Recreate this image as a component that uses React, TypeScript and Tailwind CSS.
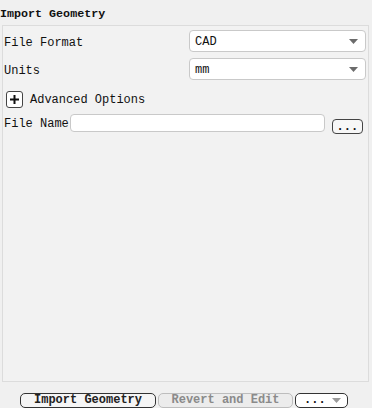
import React from "react";

const mono = { fontFamily: '"Liberation Mono", "DejaVu Sans Mono", monospace' };

function Caret({ color = "#6b6b6b" }: { color?: string }) {
  return (
    <svg width="9" height="5" viewBox="0 0 9 5">
      <path d="M0 0 H9 L4.5 5 Z" fill={color} />
    </svg>
  );
}

function Select({ value }: { value: string }) {
  return (
    <div className="flex h-[22px] w-[177px] items-center justify-between rounded-[4px] border border-[#c9c9c9] bg-white pl-[5px] pr-[7px]">
      <span className="pt-[2px] text-[12px] text-[#111]">{value}</span>
      <Caret />
    </div>
  );
}

export default function App() {
  return (
    <div className="flex h-[408px] w-[372px] flex-col bg-[#f0f0f0] text-[#111]" style={mono}>
      <div className="flex h-[25px] items-center pt-[4px] text-[11.7px] font-bold">Import Geometry</div>
      <div className="ml-[2px] mr-[3px] flex h-[357px] flex-col border border-[#dcdcdc] bg-[#f2f2f2]">
        <div className="mt-[4px] flex h-[22px] items-center justify-between pl-[1px] pr-[2px]">
          <span className="pt-[3px] text-[12px]">File Format</span>
          <Select value="CAD" />
        </div>
        <div className="mt-[6px] flex h-[22px] items-center justify-between pl-[1px] pr-[2px]">
          <span className="pt-[3px] text-[12px]">Units</span>
          <Select value="mm" />
        </div>
        <div className="mt-[10px] flex h-[18px] items-center pl-[3px]">
          <div className="flex h-[17px] w-[17px] items-center justify-center rounded-[3px] border border-[#444] bg-white">
            <svg width="11" height="11" viewBox="0 0 11 11">
              <path d="M5.5 1 V10 M1 5.5 H10" stroke="#111" strokeWidth="2" />
            </svg>
          </div>
          <span className="ml-[7px] pt-[2px] text-[12px]">Advanced Options</span>
        </div>
        <div className="mt-[5px] flex h-[20px] items-center pl-[1px]">
          <span className="pt-[2px] text-[12px]">File Name</span>
          <div className="ml-[1px] h-[18px] w-[255px] rounded-[4px] border border-[#c9c9c9] bg-white" />
          <div className="ml-[7px] mt-[7px] flex h-[15px] w-[31px] items-end justify-center rounded-[4px] border border-[#444] bg-[#f7f7f7] pb-[1px] text-[12px] font-bold leading-[10px]">
            ...
          </div>
        </div>
      </div>
      <div className="flex flex-1 items-center pl-[20px] pt-[10px]">
        <div className="flex h-[15px] w-[136px] items-center justify-center rounded-[5px] border border-[#333] bg-[#f5f5f5] text-[12px] font-bold text-[#222]">
          Import Geometry
        </div>
        <div className="ml-[2px] flex h-[15px] w-[135px] items-center justify-center rounded-[5px] border border-[#bdbdbd] bg-[#ececec] text-[12px] font-bold text-[#8a8a8a]">
          Revert and Edit
        </div>
        <div className="ml-[2px] flex h-[15px] w-[53px] items-center justify-between rounded-[5px] border border-[#333] bg-white pl-[8px] pr-[6px] text-[12px] font-bold">
          <span>...</span>
          <Caret color="#9a9a9a" />
        </div>
      </div>
    </div>
  );
}
